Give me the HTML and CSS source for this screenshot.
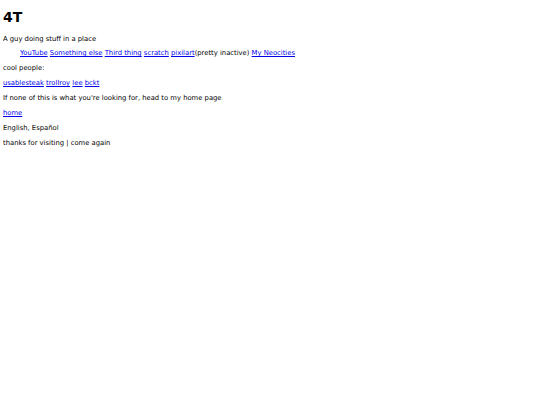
FILE: index.html
```html
<!DOCTYPE html>
<html lang="en">
<head>
  <meta charset="UTF-8">
  <meta name="viewport" content="width=device-width, initial-scale=1.0">
  <title>4T</title>
  <link rel="stylesheet" href="styles.css">
</head>
<body>

  <h1 class="title">4T</h1>
  <p class="line">A guy doing stuff in a place</p>

  <blockquote class="links">
    <a href="#">YouTube</a> <a href="#">Something else</a> <a href="#">Third thing</a> <a href="#">scratch</a> <a href="#">pixilart</a>(pretty inactive) <a href="#">My Neocities</a>
  </blockquote>

  <p class="line">cool people:</p>
  <p class="line"><a href="#">usablesteak</a> <a href="#">trollroy</a> <a href="#">lee</a> <a href="#">bckt</a></p>

  <p class="line">If none of this is what you're looking for, head to my home page</p>
  <p class="line"><a href="#">home</a></p>

  <p class="line">English, Español</p>
  <p class="line">thanks for visiting | come again</p>

</body>
</html>
```

FILE: styles.css
```css
/* page is a small, plain text page */
body {
  font-family: "DejaVu Sans", Verdana, sans-serif;
  font-size: 6.8px;
  line-height: 8px;
  color: #000;
  background-color: #fff;
  margin: 3px;
}

.title {
  font-size: 14px;
  line-height: 16px;
  font-weight: bold;
  margin: 5.5px 0 10px;
}

.line {
  margin: 6.86px 0;
}

.links {
  margin: 6.86px 17px;
}

a {
  color: #0000ee;
}
```
